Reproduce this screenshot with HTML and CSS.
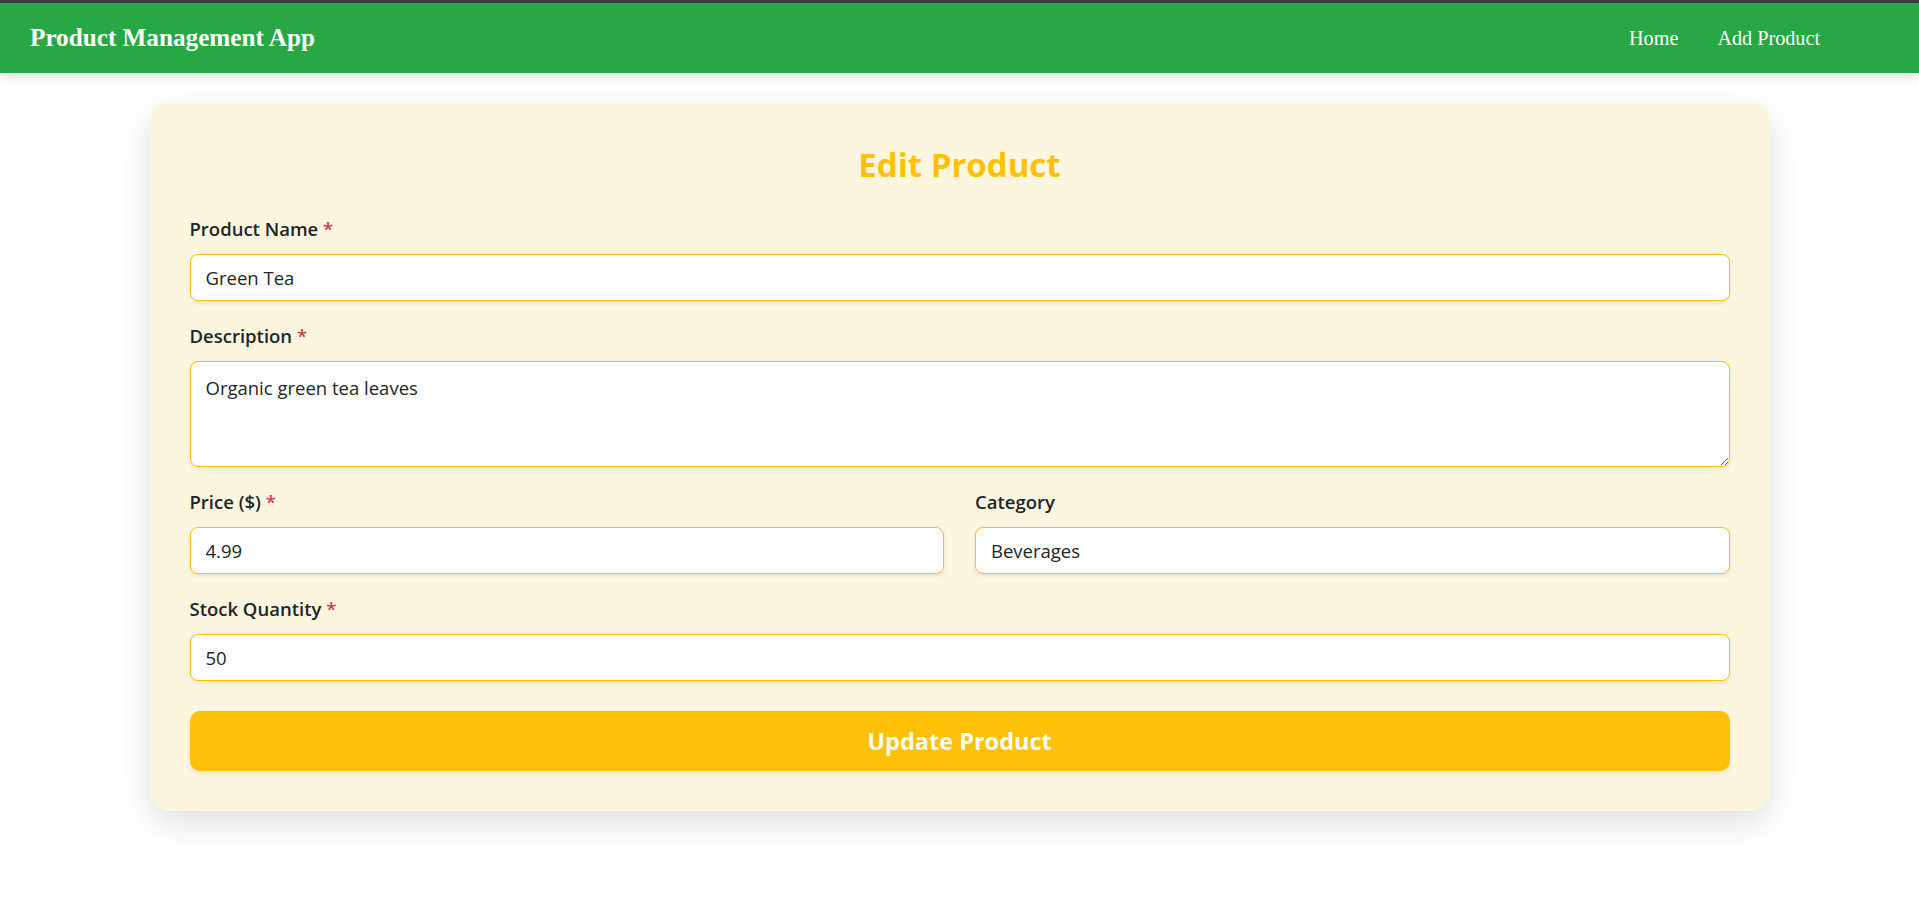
FILE: index.html
```html
<!DOCTYPE html>
<html lang="en">
<head>
<meta charset="utf-8">
<title>Product Management App</title>
<link rel="stylesheet" href="styles.css">
</head>
<body>
<div class="topline"></div>
<nav class="navbar">
  <a class="brand" href="#">Product Management App</a>
  <div class="nav-links">
    <a class="nav-link" href="#">Home</a>
    <a class="nav-link" href="#">Add Product</a>
  </div>
</nav>
<main class="page">
  <form class="card">
    <h2 class="card-title">Edit Product</h2>
    <div class="group">
      <label class="label">Product Name <span class="req">*</span></label>
      <input class="field" type="text" value="Green Tea">
    </div>
    <div class="group">
      <label class="label">Description <span class="req">*</span></label>
      <textarea class="field area">Organic green tea leaves</textarea>
    </div>
    <div class="row">
      <div class="group">
        <label class="label">Price ($) <span class="req">*</span></label>
        <input class="field" type="text" value="4.99">
      </div>
      <div class="group">
        <label class="label">Category</label>
        <input class="field" type="text" value="Beverages">
      </div>
    </div>
    <div class="group">
      <label class="label">Stock Quantity <span class="req">*</span></label>
      <input class="field" type="text" value="50">
    </div>
    <button class="submit" type="button">Update Product</button>
  </form>
</main>
</body>
</html>
```
FILE: styles.css
```css
* { box-sizing: border-box; }
html, body { margin: 0; padding: 0; }
body {
  background: #ffffff;
  font-family: "Open Sans", "Noto Sans", sans-serif;
  color: #212529;
  min-height: 911px;
}
.topline { height: 3px; background: #3a3f44; }
.navbar {
  height: 70px;
  background: #28a745;
  display: flex;
  align-items: center;
  justify-content: space-between;
  padding: 0 99px 0 30px;
  box-shadow: 0 4px 10px rgba(0, 0, 0, 0.12);
  position: relative;
}
.brand {
  font-family: "Liberation Serif", serif;
  font-weight: bold;
  font-size: 25.2px;
  color: #ffffff;
  text-decoration: none;
}
.nav-links { display: flex; gap: 39px; }
.nav-link {
  font-family: "Liberation Serif", serif;
  font-size: 20.2px;
  color: #ffffff;
  text-decoration: none;
}
.page { padding: 29px 0 60px; }
.card {
  max-width: 1620px;
  margin: 0 auto;
  background: #fdf6de;
  border-radius: 20px;
  padding: 43px 40px 40px;
  box-shadow: 0 12px 36px rgba(0, 0, 0, 0.13);
  display: flex;
  flex-direction: column;
}
.card-title {
  margin: 0 0 32px;
  text-align: center;
  color: #ffc107;
  font-size: 33px;
  line-height: 40px;
  font-weight: 700;
}
.group { display: flex; flex-direction: column; margin-bottom: 23px; }
.row { display: grid; grid-template-columns: 1fr 1fr; column-gap: 31px; }
.label {
  font-size: 18.5px;
  line-height: 24px;
  font-weight: 600;
  margin-bottom: 13px;
}
.req { color: #dc3545; }
.field {
  height: 47px;
  border: 1px solid #ffc107;
  border-radius: 8px;
  background: #ffffff;
  padding: 0 15px;
  font-family: "Open Sans", "Noto Sans", sans-serif;
  font-size: 18.5px;
  color: #212529;
  box-shadow: 0 2px 5px rgba(0, 0, 0, 0.08);
  outline: none;
}
.area {
  height: 106px;
  padding: 13px 15px 10px;
  line-height: 26px;
  resize: vertical;
}
.submit {
  margin-top: 7px;
  height: 60px;
  border: none;
  border-radius: 10px;
  background: #ffc107;
  color: #ffffff;
  font-family: "Open Sans", "Noto Sans", sans-serif;
  font-weight: 700;
  font-size: 23.5px;
  box-shadow: 0 2px 5px rgba(0, 0, 0, 0.08);
}
```
